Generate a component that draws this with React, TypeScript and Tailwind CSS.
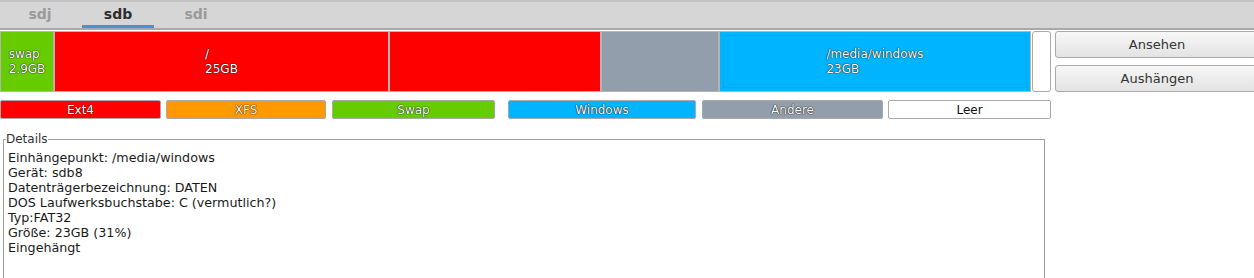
import React from 'react'

function Segment({
  w,
  color,
  lines,
  focus,
}: {
  w: string
  color: string
  lines?: string[]
  focus?: boolean
}) {
  return (
    <div
      className={`relative h-full ${w} ${color} border border-[#b4b4b4] flex items-center justify-center shrink-0`}
    >
      {lines && (
        <div className="text-left text-[12px] leading-[15px] text-white [text-shadow:0_0_1px_#000,0_0_1px_#000]">
          {lines.map((l) => (
            <div key={l}>{l}</div>
          ))}
        </div>
      )}
      {focus && (
        <div className="absolute inset-[3px] border border-dotted border-[#2f86bd]/60" />
      )}
    </div>
  )
}

function LegendChip({ w, color, label, dark }: { w: string; color: string; label: string; dark?: boolean }) {
  return (
    <div
      className={`${w} h-[19px] ${color} border border-[#a9a9a9] rounded-[2px] flex items-center justify-center text-[12px] shrink-0 ${
        dark ? 'text-[#111]' : 'text-white [text-shadow:0_0_1px_#000,0_0_1px_#000]'
      }`}
    >
      {label}
    </div>
  )
}

export default function App() {
  const details = [
    'Einhängepunkt: /media/windows',
    'Gerät: sdb8',
    'Datenträgerbezeichnung: DATEN',
    'DOS Laufwerksbuchstabe: C (vermutlich?)',
    'Typ:FAT32',
    'Größe: 23GB (31%)',
    'Eingehängt',
  ]
  return (
    <div className="w-[1254px] h-[278px] overflow-hidden bg-white font-['DejaVu_Sans',sans-serif] text-[#1a1a1a]">
      {/* tabs */}
      <div className="h-[30px] bg-[#d6d6d6] border-t-2 border-t-[#c2c2c2] border-b-2 border-b-[#a9a9a9] flex pl-[4px] gap-[6px]">
        {['sdj', 'sdb', 'sdi'].map((t) => (
          <div
            key={t}
            className={`w-[72px] h-full flex items-center justify-center pt-[1px] text-[14px] font-bold border-b-[3px] ${
              t === 'sdb' ? 'text-[#2e2e2e] border-b-[#4a90d9]' : 'text-[#9a9a9a] border-b-transparent'
            }`}
          >
            {t}
          </div>
        ))}
      </div>

      {/* partitions + buttons */}
      <div className="flex mt-[1px] h-[61px]">
        <Segment w="w-[54px]" color="bg-[#66cc00]" lines={['swap', '2.9GB']} />
        <Segment w="w-[335px]" color="bg-[#ff0000]" lines={['/', '25GB']} />
        <Segment w="w-[212px]" color="bg-[#ff0000]" />
        <Segment w="w-[118px]" color="bg-[#929eab]" />
        <Segment w="w-[312px]" color="bg-[#00b4ff]" lines={['/media/windows', '23GB']} focus />
        <div className="ml-[1px] w-[19px] h-full border border-[#a9a9a9] rounded-[3px] bg-white shrink-0" />
        <div className="ml-[4px] flex-1 flex flex-col gap-[7px]">
          <button className="h-[27px] w-[204px] rounded-[3px] border border-[#a9a9a9] bg-gradient-to-b from-[#f7f7f7] to-[#e3e3e3] text-[13px] text-[#333]">
            Ansehen
          </button>
          <button className="h-[27px] w-[204px] rounded-[3px] border border-[#a9a9a9] bg-gradient-to-b from-[#f7f7f7] to-[#e3e3e3] text-[13px] text-[#333]">
            Aushängen
          </button>
        </div>
      </div>

      {/* legend */}
      <div className="flex mt-[8px] items-center">
        <LegendChip w="w-[161px]" color="bg-[#ff0000]" label="Ext4" />
        <div className="w-[5px]" />
        <LegendChip w="w-[160px]" color="bg-[#ff9900]" label="XFS" />
        <div className="w-[6px]" />
        <LegendChip w="w-[163px]" color="bg-[#66cc00]" label="Swap" />
        <div className="w-[13px]" />
        <LegendChip w="w-[188px]" color="bg-[#00b4ff]" label="Windows" />
        <div className="w-[6px]" />
        <LegendChip w="w-[181px]" color="bg-[#929eab]" label="Andere" />
        <div className="w-[5px]" />
        <LegendChip w="w-[163px]" color="bg-white" label="Leer" dark />
      </div>

      {/* details */}
      <fieldset className="ml-[3px] mt-[13px] w-[1042px] h-[160px] border border-[#a0a0a0] pl-[4px] pt-[4px]">
        <legend className="text-[12px] text-[#333] px-0 ml-[-2px] leading-[14px]">Details</legend>
        <div className="text-[12.7px] leading-[15px] text-[#1a1a1a]">
          {details.map((d) => (
            <div key={d}>{d}</div>
          ))}
        </div>
      </fieldset>
    </div>
  )
}
